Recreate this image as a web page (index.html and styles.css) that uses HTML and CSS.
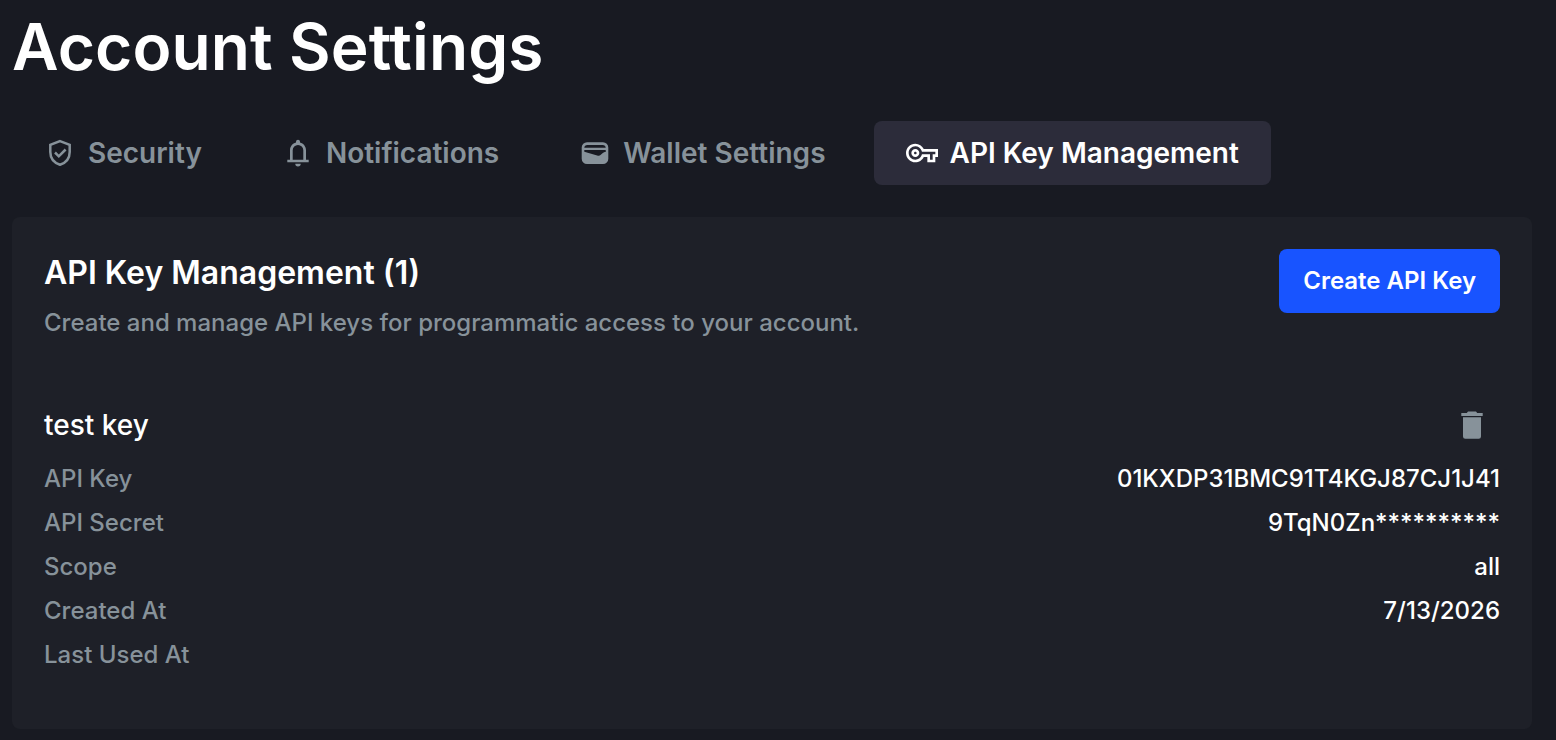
FILE: index.html
```html
<!DOCTYPE html>
<html lang="en">
<head>
  <meta charset="UTF-8">
  <meta name="viewport" content="width=device-width, initial-scale=1.0">
  <title>Account Settings</title>
  <link rel="stylesheet" href="styles.css">
</head>
<body>
  <main class="page">
    <h1>Account Settings</h1>

    <nav class="tabs">
      <a class="tab" href="#security">
        <svg class="icon" viewBox="0 0 32 32" fill="none" stroke="currentColor" stroke-width="2.5">
          <path d="M16 4.200 25.700 7.800V15C25.700 21 21.800 25.800 16 27.800 10.200 25.800 6.300 21 6.300 15V7.800Z"/>
          <path d="m11 15.500 3.800 3.800 6.800-6.800"/>
        </svg>
        Security
      </a>
      <a class="tab" href="#notifications">
        <svg class="icon" viewBox="0 0 32 32" fill="currentColor">
          <path d="M5.300 25.300v-2.600H8v-9.400c0-3.700 2.500-6.800 6-7.700V4.700a2 2 0 0 1 4 0v.9c3.500.9 6 4 6 7.700v9.400h2.700v2.600Zm5.400-2.600h10.600v-9.400a5.300 5.300 0 0 0-10.600 0ZM13.300 26.700h5.400a2.700 2.700 0 0 1-5.400 0Z"/>
        </svg>
        Notifications
      </a>
      <a class="tab" href="#wallet">
        <svg class="icon" viewBox="0 0 32 32" fill="currentColor" fill-rule="evenodd">
          <path d="M8 5.200H24a5.300 5.300 0 0 1 5.300 5.300V21.700a5.300 5.300 0 0 1-5.300 5.300H8a5.300 5.300 0 0 1-5.300-5.300V10.500A5.300 5.300 0 0 1 8 5.200ZM5.300 10.700H26.700A3 3 0 0 0 23.700 8H8.300A3 3 0 0 0 5.300 10.700ZM5.300 13V14.800L19 18.700C20 19 20.800 18.700 21.500 18L23.500 16.200C24.500 15.300 25.500 15 26.700 15V13Z"/>
        </svg>
        Wallet Settings
      </a>
      <a class="tab active" href="#api-keys">
        <svg class="icon" viewBox="0 0 24 24" fill="currentColor">
          <path d="M22 19h-6v-4h-2.680c-1.140 2.420-3.600 4-6.320 4-3.860 0-7-3.140-7-7s3.140-7 7-7c2.720 0 5.170 1.580 6.320 4H24v6h-2v4zm-4-2h2v-4h2v-2H11.940l-.23-.67C11.010 8.340 9.110 7 7 7c-2.760 0-5 2.240-5 5s2.240 5 5 5c2.110 0 4.010-1.340 4.710-3.330l.23-.67H18v4zM7 15c-1.650 0-3-1.350-3-3s1.350-3 3-3 3 1.350 3 3-1.350 3-3 3zm0-4c-.55 0-1 .45-1 1s.45 1 1 1 1-.45 1-1-.45-1-1-1z"/>
        </svg>
        API Key Management
      </a>
    </nav>

    <section class="card">
      <header class="card-header">
        <div>
          <h2>API Key Management (1)</h2>
          <p>Create and manage API keys for programmatic access to your account.</p>
        </div>
        <button class="btn">Create API Key</button>
      </header>

      <div class="key">
        <div class="key-header">
          <h3>test key</h3>
          <button class="delete" aria-label="Delete key">
            <svg viewBox="0 0 32 32" fill="currentColor">
              <path d="M7 8.300h18v19.200a2.300 2.300 0 0 1-2.300 2.300H9.300A2.300 2.300 0 0 1 7 27.500ZM5.300 4.100h5.500L12 2.500h8L21.200 4.100h5.500V7H5.300Z"/>
            </svg>
          </button>
        </div>
        <dl>
          <div class="row"><dt>API Key</dt><dd>01KXDP31BMC91T4KGJ87CJ1J41</dd></div>
          <div class="row"><dt>API Secret</dt><dd>9TqN0Zn**********</dd></div>
          <div class="row"><dt>Scope</dt><dd>all</dd></div>
          <div class="row"><dt>Created At</dt><dd>7/13/2026</dd></div>
          <div class="row"><dt>Last Used At</dt><dd></dd></div>
        </dl>
      </div>
    </section>
  </main>
</body>
</html>
```

FILE: styles.css
```css
:root {
  --bg-color: #181a22;
  --card-bg: #1e2028;
  --active-bg: #2c2c3a;
  --text-color: #ffffff;
  --muted-color: #87929a;
  --primary-color: #1854ff;
}

* {
  box-sizing: border-box;
}

body {
  margin: 0;
  background-color: var(--bg-color);
  color: var(--text-color);
  font-family: Inter, sans-serif;
  font-weight: 500;
  overflow: hidden;
}

h1, h2, h3, p, dl, dd {
  margin: 0;
}

.page {
  padding: 7px 24px 0 12px;
}

h1 {
  font-size: 64px;
  line-height: 80px;
  font-weight: 600;
  letter-spacing: 0.1px;
}

.tabs {
  display: flex;
  gap: 16px;
  margin-top: 34px;
}

.tab {
  display: flex;
  align-items: center;
  gap: 12px;
  height: 64px;
  padding: 0 32px;
  border-radius: 8px;
  color: var(--muted-color);
  font-size: 28px;
  font-weight: 600;
  text-decoration: none;
}

.tab.active {
  background-color: var(--active-bg);
  color: var(--text-color);
}

.icon {
  width: 32px;
  height: 32px;
}

.card {
  height: 512px;
  margin-top: 32px;
  padding: 32px;
  border-radius: 8px;
  background-color: var(--card-bg);
}

.card-header {
  display: flex;
  justify-content: space-between;
  align-items: flex-start;
}

h2 {
  font-size: 32px;
  line-height: 48px;
  font-weight: 600;
}

.card-header p {
  margin-top: 8px;
  color: var(--muted-color);
  font-size: 24px;
  line-height: 36px;
}

.btn {
  height: 64px;
  padding: 0 24px 2px;
  border: none;
  border-radius: 8px;
  background-color: var(--primary-color);
  color: var(--text-color);
  font: 600 24px Inter, sans-serif;
}

.key {
  margin-top: 56px;
}

.key-header {
  display: flex;
  justify-content: space-between;
  align-items: center;
  height: 56px;
}

h3 {
  font-size: 28px;
  font-weight: 500;
}

.delete {
  display: flex;
  padding: 12px;
  border: none;
  background: none;
  color: var(--muted-color);
}

.delete svg {
  width: 32px;
  height: 32px;
}

dl {
  margin-top: 4px;
}

.row {
  display: flex;
  justify-content: space-between;
  height: 44px;
  font-size: 24px;
  line-height: 44px;
}

dt {
  color: var(--muted-color);
}
```
